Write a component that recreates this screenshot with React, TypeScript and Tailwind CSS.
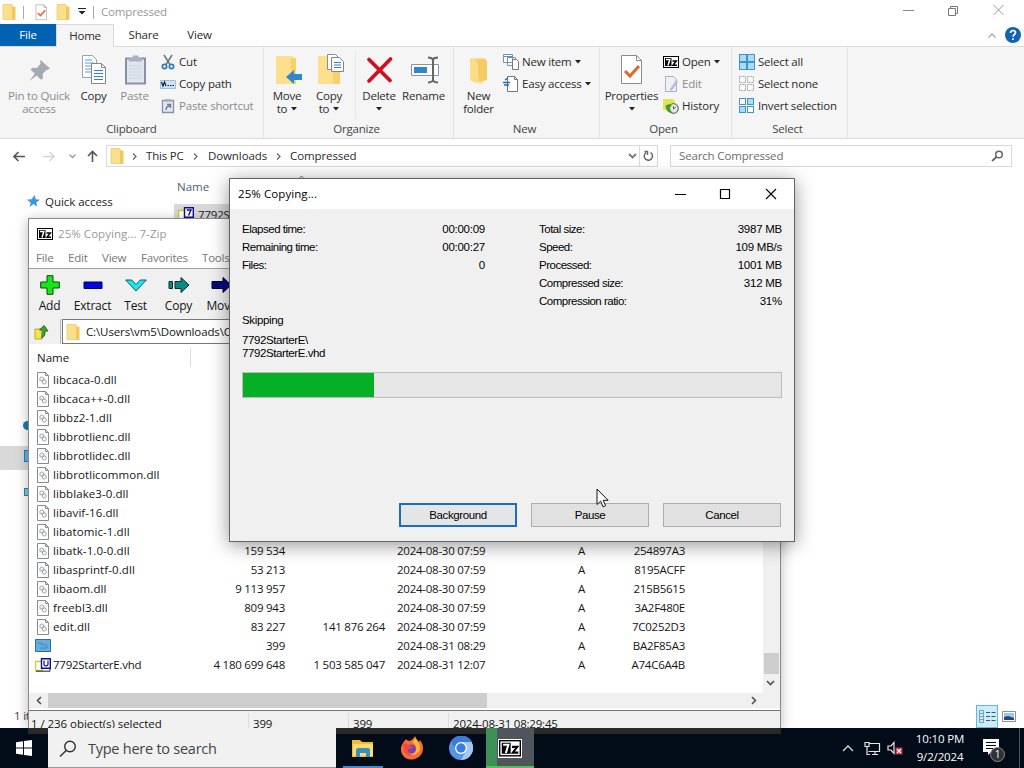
// Windows 10 desktop: Explorer in the back, 7-Zip file manager and its copy dialog on top.

import type { ReactNode } from 'react'

const FILES: string[][] = [
  ['libcaca-0.dll', '', '', '', '', ''],
  ['libcaca++-0.dll', '', '', '', '', ''],
  ['libbz2-1.dll', '', '', '', '', ''],
  ['libbrotlienc.dll', '', '', '', '', ''],
  ['libbrotlidec.dll', '', '', '', '', ''],
  ['libbrotlicommon.dll', '', '', '', '', ''],
  ['libblake3-0.dll', '', '', '', '', ''],
  ['libavif-16.dll', '', '', '', '', ''],
  ['libatomic-1.dll', '', '', '', '', ''],
  ['libatk-1.0-0.dll', '159 534', '', '2024-08-30 07:59', 'A', '254897A3'],
  ['libasprintf-0.dll', '53 213', '', '2024-08-30 07:59', 'A', '8195ACFF'],
  ['libaom.dll', '9 113 957', '', '2024-08-30 07:59', 'A', '215B5615'],
  ['freebl3.dll', '809 943', '', '2024-08-30 07:59', 'A', '3A2F480E'],
  ['edit.dll', '83 227', '141 876 264', '2024-08-30 07:59', 'A', '7C0252D3'],
  ['', '399', '', '2024-08-31 08:29', 'A', 'BA2F85A3'],
  ['7792StarterE.vhd', '4 180 699 648', '1 503 585 047', '2024-08-31 12:07', 'A', 'A74C6A4B'],
]

const LEFT_STATS = [
  ['Elapsed time:', '00:00:09'],
  ['Remaining time:', '00:00:27'],
  ['Files:', '0'],
]

const RIGHT_STATS = [
  ['Total size:', '3987 MB'],
  ['Speed:', '109 MB/s'],
  ['Processed:', '1001 MB'],
  ['Compressed size:', '312 MB'],
  ['Compression ratio:', '31%'],
]

/* ---------- icons ---------- */

function Svg({ w, h, children, className = '' }: { w: number; h: number; children: ReactNode; className?: string }) {
  return (
    <svg width={w} height={h} viewBox={`0 0 ${w} ${h}`} fill="none" className={`shrink-0 ${className}`}>
      {children}
    </svg>
  )
}

const Folder = () => (
  <Svg w={14} h={16}>
    <path d="M1 .5h9v2h2v13H1z" fill="#fbe08a" />
    <path d="M10 2.5h2.5l1 1v12H10z" fill="#f1c85e" />
    <path d="M1 .5h9v2M1 .5v15h12.5" stroke="#e9c565" strokeWidth=".7" />
  </Svg>
)

const Caret = () => (
  <Svg w={6} h={4}><path d="M0 0h6L3 3.5z" fill="#222" /></Svg>
)

const SevenZip = ({ size = 16 }: { size?: number }) => (
  <svg width={size} height={size * 0.75} viewBox="0 0 16 12" fill="none" className="shrink-0">
    <path d="M0 0h16v12H0z" fill="#000" />
    <path d="M1 1h14v10H1z" fill="#fff" />
    <path d="M2 2h6.5v8H2z" fill="#000" />
    <path d="M3 3.5h3.8L5 9.5" stroke="#fff" strokeWidth="1.5" />
    <path d="M9.5 5h3.8L10 9.2h4" stroke="#000" strokeWidth="1.5" />
  </svg>
)

const PinIcon = () => (
  <Svg w={32} h={32}>
    <path d="M17.5 6l9.500 8.500-2.500 1.500-1-.2-3.800 4.300.3 4.200-2 1.400-4.400-4.100-7 5.400 5.200-7.600-4.200-3.700 1.800-2 4.500.4 3.800-4.600-.6-1.600z" fill="#a5a9b0" />
  </Svg>
)

const CopyPages = () => (
  <Svg w={32} h={32}>
    <path d="M4.5 1.5h10l4 4v18h-14z" fill="#fff" stroke="#9aa0a8" />
    <path d="M7 6h7M7 9h9M7 12h9M7 15h9M7 18h9" stroke="#5b9bd5" />
    <path d="M13.500 9.500h10l4 4v16h-14z" fill="#fff" stroke="#7f8790" />
    <path d="M23.500 9.500v4h4" stroke="#7f8790" />
    <path d="M16 16.500h9M16 19.500h9M16 22.500h9M16 25.500h9" stroke="#2f80cf" />
  </Svg>
)

const PasteIcon = () => (
  <Svg w={32} h={32}>
    <path d="M7 4.500h19v25H7z" fill="#dfe6ee" stroke="#8792a5" strokeWidth="2" />
    <path d="M10 4.500c2 0 4-1 4-3h5c0 2 2 3 4 3v3H10z" fill="#aab2bd" />
    <path d="M10 12h13M10 15h13M10 18h13M10 21h13M10 24h13" stroke="#cbd5df" />
  </Svg>
)

const Scissors = () => (
  <Svg w={16} h={16}>
    <path d="M4 1l6 9.500M12 1l-6 9.500" stroke="#6b7480" strokeWidth="1.500" />
    <circle cx="4.500" cy="12.500" r="2.200" stroke="#2d7fb8" strokeWidth="1.700" />
    <circle cx="11.500" cy="12.500" r="2.200" stroke="#2d7fb8" strokeWidth="1.700" />
  </Svg>
)

const CopyPath = () => (
  <Svg w={16} h={16}>
    <path d="M.5 4.500h15v8H.5z" fill="#cfe2f5" stroke="#9fbfe0" />
    <path d="M1.500 6l1.500 4 1.500-4L6 10M7.500 9.500H9M10 9.500h1.500M12.500 9.500H14" stroke="#123" strokeWidth="1.200" />
  </Svg>
)

const PasteShortcut = () => (
  <Svg w={16} h={16}>
    <path d="M2.500 2.500h11v12h-11z" fill="#e3e9f0" stroke="#8792a5" strokeWidth="1.300" />
    <path d="M5 1h6v3H5z" fill="#aab2bd" />
    <path d="M6 12c0-3 1-4 4-4M7 6.500h3.500V10" stroke="#6d7a92" strokeWidth="1.400" />
  </Svg>
)

const MoveTo = () => (
  <Svg w={32} h={32}>
    <path d="M5 2h17v28H5z" fill="#fce08b" />
    <path d="M22 4h3v26h-5V4z" fill="#f7cf6b" />
    <path d="M15 23l8-7v4h8v6h-8v4z" fill="#3187cf" />
  </Svg>
)

const CopyTo = () => (
  <Svg w={32} h={32}>
    <path d="M5 2h17v28H5z" fill="#fce08b" />
    <path d="M22 8h5v22h-7V8z" fill="#f7cf6b" />
    <path d="M14.500.5h8l3 3v12h-11z" fill="#fff" stroke="#858d98" />
    <path d="M18.500 3.500h8l4 4v10h-12z" fill="#fff" stroke="#7b8490" />
    <path d="M21 8.500h7M21 11h7M21 13.500h7" stroke="#3d7fc4" />
  </Svg>
)

const DeleteX = () => (
  <Svg w={32} h={32}>
    <path d="M6 5.500l21 21M27.500 5L6 27" stroke="#cf1020" strokeWidth="3.800" strokeLinecap="round" />
  </Svg>
)

const RenameIcon = () => (
  <Svg w={32} h={32}>
    <path d="M3.500 10.500h27v11h-27z" fill="#fff" stroke="#8b949e" />
    <path d="M6 13h13v6H6z" fill="#3187cf" />
    <path d="M20 3.500c3 0 4 .5 5 2 1-1.500 2-2 5-2M25 5v22M20 28.500c3 0 4-.5 5-2 1 1.500 2 2 5 2" stroke="#666" strokeWidth="2" />
  </Svg>
)

const NewFolder = () => (
  <Svg w={32} h={32}>
    <path d="M7 4h15v22l-4 4-10-3z" fill="#fbe39a" />
    <path d="M12 5h10l2 2v19l-8 2z" fill="#f5cb66" />
    <path d="M7 4l8 4v21l-8-3z" fill="#fbdc88" />
  </Svg>
)

const NewItem = () => (
  <Svg w={16} h={16}>
    <path d="M.5.5h9v8h-9zM4.500 3.500h8v8h-8z" fill="#fff" stroke="#7893a8" />
    <path d="M9.500 5.500h4l2 2v8h-6z" fill="#fff" stroke="#777" />
    <path d="M1 2.500h8" stroke="#4e93c5" />
  </Svg>
)

const EasyAccess = () => (
  <Svg w={16} h={16}>
    <path d="M4.500.5h7l3 3v12h-10z" fill="#fff" stroke="#6d7882" />
    <path d="M11.500.5v3h3" stroke="#6d7882" />
    <path d="M0 6.500h7M1 9h5M2 4l3-2" stroke="#236fae" strokeWidth="1.500" />
  </Svg>
)

const PropertiesIcon = ({ size = 32 }: { size?: number }) => (
  <svg width={size} height={size} viewBox="0 0 32 32" fill="none" className="shrink-0">
    <path d="M5.500 1.500h15l5 5v23h-20z" fill="#fff" stroke="#8b8b8b" />
    <path d="M20.500 1.500v5h5" stroke="#8b8b8b" />
    <path d="M9 17l5 5 9-10" stroke="#e2682b" strokeWidth="3" />
  </svg>
)

const EditIcon = () => (
  <Svg w={16} h={16}>
    <path d="M2.500.5h8l3 3v12h-11z" fill="#eef0f6" stroke="#aab0c0" />
    <path d="M7 13l6-9 2 1.500-6 9H7z" fill="#b5bdcf" />
  </Svg>
)

const HistoryIcon = () => (
  <Svg w={16} h={16}>
    <path d="M0 1h10l2 2v9H0z" fill="#e6e255" />
    <circle cx="10.500" cy="10.500" r="4.800" fill="#e3ece4" stroke="#5d7d68" strokeWidth="1.200" />
    <path d="M10.500 8v3l2.500-2" stroke="#666" />
    <path d="M2 8l4-2 3 2-2 1c0 3 1 4 3 6-5 0-7-3-7-6z" fill="#3f9d2c" />
  </Svg>
)

function SelectIcon({ kind }: { kind: 'all' | 'none' | 'invert' }) {
  const cells = [[0, 0], [8, 0], [0, 8], [8, 8]]
  const size = kind === 'all' ? 7 : 6
  return (
    <Svg w={16} h={16}>
      {cells.map(([x, y], i) => {
        const on = kind === 'all' || (kind === 'invert' && (i === 1 || i === 2))
        return (
          <rect
            key={i} x={x + 0.5} y={y + 0.5} width={size} height={size}
            fill={on ? '#a9dcfb' : '#fafafa'}
            stroke={kind === 'none' ? '#a2a2a2' : '#4193c8'}
            strokeDasharray={kind === 'none' ? '2 1' : undefined}
          />
        )
      })}
    </Svg>
  )
}

const DllIcon = () => (
  <Svg w={12} h={16}>
    <path d="M.5.5h8l3 3v12H.5z" fill="#fff" stroke="#8a8a8a" />
    <path d="M8.500.5v3h3" stroke="#8a8a8a" />
    <circle cx="4.800" cy="7" r="2" stroke="#9aa1a8" />
    <circle cx="7.300" cy="10" r="2" stroke="#9aa1a8" />
    <path d="M2.500 9l6-2" stroke="#b5babf" />
  </Svg>
)

const ArchiveIcon = ({ letter }: { letter: 'U' | '7' }) => (
  <Svg w={16} h={14}>
    <path d="M.5 3.500h7v9h-7z" fill="#fff" stroke="#c9cf1a" strokeWidth="1.300" />
    <path d="M1 13.200h14V10.500" stroke="#222" />
    <path d="M6.500.7h8.800v9.600H6.500z" fill="#fff" stroke="#10108a" strokeWidth="1.400" />
    {letter === 'U'
      ? <path d="M9 2.500V6c0 2.500 4 2.500 4 0V2.500" stroke="#10108a" strokeWidth="1.200" />
      : <path d="M8.800 3H13l-2.500 5.500" stroke="#10108a" strokeWidth="1.400" />}
  </Svg>
)

/* ---------- ribbon ---------- */

function Group({ label, className, children }: { label: string; className: string; children: ReactNode }) {
  return (
    <div className={`flex flex-col shrink-0 border-r border-[#e2e3e4] ${className}`}>
      <div className="flex h-[73px] pt-1">{children}</div>
      <div className="text-center leading-[17px] text-[#444]">{label}</div>
    </div>
  )
}

function BigButton({ icon, lines, caret, className }: { icon: ReactNode; lines: string[]; caret?: boolean; className: string }) {
  return (
    <div className={`flex flex-col items-center shrink-0 whitespace-nowrap pt-[3px] ${className}`}>
      {icon}
      <div className="mt-[3px] leading-[13px] text-center">{lines[0]}</div>
      <div className="flex items-center justify-center gap-1 h-[13px] leading-[13px]">
        {lines[1]}
        {caret && <Caret />}
      </div>
    </div>
  )
}

function SmallButton({ icon, label, caret, off }: { icon: ReactNode; label: string; caret?: boolean; off?: boolean }) {
  return (
    <div className={`flex items-center h-[22px] gap-[3px] whitespace-nowrap ${off ? 'text-[#8b8b8b]' : ''}`}>
      {icon}
      <span>{label}</span>
      {caret && <Caret />}
    </div>
  )
}

function Ribbon() {
  return (
    <div className="flex h-[93px] bg-[#f5f5f6] border-y border-[#dadbdc] text-[#2b2b2b]">
      <Group label="Clipboard" className="w-[264px]">
        <BigButton className="w-[78px] text-[#8b8b8b]" icon={<PinIcon />} lines={['Pin to Quick', 'access']} />
        <BigButton className="w-[31px]" icon={<CopyPages />} lines={['Copy', '']} />
        <BigButton className="w-[51px] text-[#8b8b8b]" icon={<PasteIcon />} lines={['Paste', '']} />
        <div>
          <SmallButton icon={<Scissors />} label="Cut" />
          <SmallButton icon={<CopyPath />} label="Copy path" />
          <SmallButton icon={<PasteShortcut />} label="Paste shortcut" off />
        </div>
      </Group>
      <Group label="Organize" className="w-[190px] pr-1">
        <BigButton className="ml-[3px] w-[40px]" icon={<MoveTo />} lines={['Move', 'to']} caret />
        <BigButton className="w-[44px]" icon={<CopyTo />} lines={['Copy', 'to']} caret />
        <div className="ml-1 w-px h-[68px] bg-[#e6e7e8]" />
        <BigButton className="w-[46px]" icon={<DeleteX />} lines={['Delete', '']} caret />
        <BigButton className="w-[43px]" icon={<RenameIcon />} lines={['Rename', '']} />
      </Group>
      <Group label="New" className="w-[146px] pr-1">
        <BigButton className="w-[49px]" icon={<NewFolder />} lines={['New', 'folder']} />
        <div>
          <SmallButton icon={<NewItem />} label="New item" caret />
          <SmallButton icon={<EasyAccess />} label="Easy access" caret />
        </div>
      </Group>
      <Group label="Open" className="w-[132px] pr-1">
        <BigButton className="w-[61px] ml-[1px] mr-[1px]" icon={<PropertiesIcon />} lines={['Properties', '']} caret />
        <div>
          <SmallButton icon={<SevenZip />} label="Open" caret />
          <SmallButton icon={<EditIcon />} label="Edit" off />
          <SmallButton icon={<HistoryIcon />} label="History" />
        </div>
      </Group>
      <Group label="Select" className="w-[116px] pr-1">
        <div className="ml-[7px]">
          <SmallButton icon={<SelectIcon kind="all" />} label="Select all" />
          <SmallButton icon={<SelectIcon kind="none" />} label="Select none" />
          <SmallButton icon={<SelectIcon kind="invert" />} label="Invert selection" />
        </div>
      </Group>
    </div>
  )
}

/* ---------- explorer ---------- */

const Chev = () => <Svg w={5} h={7}><path d="M1 .5l3 3-3 3" stroke="#666" strokeWidth="1.200" /></Svg>

function Explorer() {
  return (
    <div className="flex flex-col h-[728px] bg-white">
      <div className="flex items-center h-6 pl-[2px]">
        <Folder />
        <div className="ml-[7px] w-px h-[13px] bg-[#aaa]" />
        <div className="ml-[9px]"><PropertiesIcon size={17} /></div>
        <div className="ml-[6px]"><Folder /></div>
        <Svg w={8} h={8} className="ml-[8px]"><path d="M0 .5h8" stroke="#222" /><path d="M.5 3h7L4 6.500z" fill="#222" /></Svg>
        <div className="ml-[7px] w-px h-[13px] bg-[#aaa]" />
        <div className="ml-[7px] text-[#999] tracking-[-0.15px]">Compressed</div>
        <Svg w={110} h={14} className="ml-auto mr-[16px] -mt-1">
          <path d="M5 7.500h11" stroke="#888" />
          <path d="M50.500 5.500h7v7h-7zM52.500 5.500v-2h7v7h-2" stroke="#777" />
          <path d="M95.500 2l10 10M105.500 2l-10 10" stroke="#999" />
        </Svg>
      </div>
      <div className="flex h-[22px] leading-[22px] text-center text-[#2b2b2b]">
        <div className="w-[56px] bg-[#0063b1] text-white">File</div>
        <div className="relative w-[58px] h-[23px] leading-[21px] bg-[#f5f5f6] border-x border-t border-[#dadbdc]">Home</div>
        <div className="w-[59px]">Share</div>
        <div className="w-[53px]">View</div>
        <div className="ml-auto flex items-center gap-[9px] pr-[3px]">
          <Svg w={8} h={5}><path d="M.5 4.500L4 1l3.500 3.500" stroke="#aaa" strokeWidth="1.300" /></Svg>
          <Svg w={16} h={16}>
            <circle cx="8" cy="8" r="8" fill="#0f62b4" />
            <path d="M5.500 6c0-3.300 5-3.300 5-.3 0 1.800-2.400 1.800-2.400 4M8 11.300V13" stroke="#fff" strokeWidth="1.700" />
          </Svg>
        </div>
      </div>
      <Ribbon />

      <div className="flex items-center h-[34px] pl-[13px] text-[#2b2b2b]">
        <Svg w={12} h={11}><path d="M12 5.500H1M5.500 1L1 5.500 5.500 10" stroke="#555" strokeWidth="1.600" /></Svg>
        <Svg w={12} h={11} className="ml-[18px]"><path d="M0 5.500h11M6.500 1L11 5.500 6.500 10" stroke="#d4d4d4" strokeWidth="1.300" /></Svg>
        <Svg w={7} h={5} className="ml-[14px]"><path d="M.5.5l3 3 3-3" stroke="#999" strokeWidth="1.300" /></Svg>
        <Svg w={11} h={12} className="ml-[11px]"><path d="M5.500 12V1.500M1 6l4.500-4.500L10 6" stroke="#555" strokeWidth="1.600" /></Svg>
        <div className="ml-[8px] flex items-center w-[552px] h-[22px] border border-[#d9d9d9]">
          <div className="ml-[3px]"><Folder /></div>
          <div className="ml-[8px]"><Chev /></div>
          <span className="ml-[9px] w-[39px]">This PC</span>
          <div className="ml-[8px]"><Chev /></div>
          <span className="ml-[10px] w-[60px] tracking-[-0.1px]">Downloads</span>
          <div className="ml-[8px]"><Chev /></div>
          <span className="ml-[9px] tracking-[-0.1px]">Compressed</span>
          <Svg w={9} h={6} className="ml-auto mr-[2px]"><path d="M1 1l3.500 3.500L8 1" stroke="#777" strokeWidth="1.800" /></Svg>
          <div className="flex items-center justify-center w-[18px] h-full border-l border-[#d9d9d9]">
            <Svg w={11} h={12}><path d="M3 2.500C1 4 .8 7 2.200 8.800c2 2.300 6 1.700 7-1.300.6-2-.2-4-1.700-5M1.500 1.500h3v3.500" stroke="#666" strokeWidth="1.500" /></Svg>
          </div>
        </div>
        <div className="ml-[12px] flex items-center justify-between w-[342px] h-[22px] pl-[8px] pr-[7px] border border-[#d9d9d9] text-[#6d6d6d]">
          <span className="tracking-[-0.15px]">Search Compressed</span>
          <Svg w={13} h={12}><circle cx="8" cy="4.500" r="3.300" stroke="#666" strokeWidth="1.500" /><path d="M5.500 7L1 11" stroke="#666" strokeWidth="1.800" /></Svg>
        </div>
      </div>

      <div className="flex grow text-[#222]">
        <div className="w-[174px] pt-[19px]">
          <div className="flex items-center h-[19px] pl-[27px] gap-[5px] tracking-[-0.05px]">
            <Svg w={13} h={13}><path d="M7.500 0l1.200 4.200 4.300.6-3.600 2.400.6 4.600-3.500-2.700L2.500 12l1.200-4.300L0 4.500l4.700-.3z" fill="#3c97db" /></Svg>
            <span>Quick access</span>
          </div>
          <div className="mt-[210px] ml-[23px] w-[10px] h-[9px] rounded-full bg-[#1e78b4]" />
          <div className="mt-[16px] h-[24px] bg-[#d9d9d9] pt-[4px] pl-[24px]">
            <div className="w-3 h-3 bg-[#65b2ea] border border-[#2c78ad]" />
          </div>
          <div className="mt-[18px] ml-[24px] w-3 h-[8px] bg-[#7dc6d8] border border-[#3a8397]" />
        </div>
        <div className="w-[500px] pt-[2px]">
          <div className="flex h-[22px] pl-[3px] text-[#4c607a]">
            <span className="w-[120px] leading-[24px] tracking-normal">Name</span>
            <Svg w={9} h={5}><path d="M1 4.500L4.500 1 8 4.500" stroke="#777" /></Svg>
          </div>
          <div className="mt-[7px] flex items-center h-[19px] pl-1 gap-[4px] bg-[#d9d9d9]">
            <ArchiveIcon letter="7" />
            <span className="relative top-px">7792StarterE</span>
          </div>
        </div>
      </div>

      <div className="flex items-center h-[24px] pl-[14px] pr-[7px]">
        <span className="text-[#444]">1 item</span>
        <div className="ml-auto w-[22px] h-[23px] flex items-center justify-center bg-[#ccebfb] border border-[#62b8de]">
          <Svg w={17} h={13}>
            <path d="M.5.5h4v12h-4zM.5 3.500h4M.5 6.500h4M.5 9.500h4" stroke="#7ba0b4" />
            <path d="M7 2.500h4M7 6.500h4M7 10.500h4M12.500 2.500h4M12.500 6.500h4M12.500 10.500h4" stroke="#37576b" />
          </Svg>
        </div>
        <Svg w={14} h={11} className="ml-[4px] mr-px">
          <path d="M.5.5h13v10H.5z" fill="#fff" stroke="#8a8fb0" />
          <path d="M2 2h10v7H2z" fill="#9cc9e8" />
          <path d="M2 9V6l4-1 6 2v2z" fill="#27496b" />
        </Svg>
      </div>
    </div>
  )
}

/* ---------- 7-Zip file manager ---------- */

const TOOLS: { label: string; icon: ReactNode }[] = [
  { label: 'Add', icon: <Svg w={20} h={20}><path d="M7 .7h6V7h6.300v6H13v6.300H7V13H.7V7H7z" fill="#19e619" stroke="#0a4a0a" /></Svg> },
  { label: 'Extract', icon: <Svg w={20} h={20}><path d="M1 7h18v6.500H1z" fill="#0505e0" stroke="#00005a" /></Svg> },
  { label: 'Test', icon: <Svg w={22} h={20}><path d="M.7 5h6L11 9.500 15.300 5h6L11 16z" fill="#18e8f0" stroke="#0b5c60" /></Svg> },
  { label: 'Copy', icon: <Svg w={22} h={20}><path d="M1 6.500h3.500v7H1zM7 6.500h6v-4l8 7.500-8 7.500v-4H7z" fill="#128585" stroke="#06302f" /></Svg> },
  { label: 'Move', icon: <Svg w={22} h={20}><path d="M1 6.500h11v-4l8 7.500-8 7.500v-4H1z" fill="#0a0a7a" stroke="#000038" /></Svg> },
]

function rowIcon(name: string) {
  if (name.endsWith('.dll')) return <DllIcon />
  if (name.endsWith('.vhd')) return <ArchiveIcon letter="U" />
  return (
    <Svg w={16} h={13}>
      <path d="M.5.5h15v12H.5z" fill="#66aede" stroke="#2d6d9e" />
      <path d="M3 4h4v2h5v3H5" stroke="#3c86ba" />
    </Svg>
  )
}

function FileManager() {
  return (
    <div className="absolute left-[28px] top-[218px] w-[753px] h-[510px] flex flex-col overflow-hidden bg-[#f0f0f0] border-x border-t border-[#8a8a8a] text-[#151515]">
      <div className="flex items-center h-[29px] shrink-0 bg-white pl-[8px] gap-[5px] text-[#999] tracking-[0.05px]">
        <SevenZip />
        <span>25% Copying... 7-Zip</span>
      </div>
      <div className="flex h-[21px] shrink-0 leading-[20px] bg-white border-b border-[#a0a0a0] pl-[7px] text-[#777]">
        <span className="w-[32px]">File</span>
        <span className="w-[34px]">Edit</span>
        <span className="w-[39px]">View</span>
        <span className="w-[61px]">Favorites</span>
        <span>Tools</span>
      </div>
      <div className="flex h-[50px] shrink-0 pt-[6px] -ml-px">
        {TOOLS.map(t => (
          <div key={t.label} className="flex flex-col items-center w-[43px] text-[12px]">
            {t.icon}
            <span className="mt-[3px] leading-[16px]">{t.label}</span>
          </div>
        ))}
      </div>
      <div className="flex items-center h-[25px] shrink-0">
        <div className="flex items-center w-[32px] h-full pl-[5px] border-r border-[#bbb]">
          <Svg w={16} h={16}>
            <path d="M1 5h7v10H1z" fill="#f4e34f" stroke="#c4aa20" />
            <path d="M7 14c4-1 4-4 4-7h3l-4-5.500L5.500 6H8" fill="#3fa02a" stroke="#1f6b16" />
          </Svg>
        </div>
        <div className="ml-px flex items-center grow h-full bg-white border border-r-0 border-[#777] pl-[3px] gap-[6px] whitespace-nowrap tracking-[-0.12px]">
          <Folder />
          <span>C:\Users\vm5\Downloads\Compressed\7792StarterE.7z\</span>
        </div>
      </div>
      <div className="flex flex-col h-[367px] shrink-0 bg-white border-b border-[#777]">
        <div className="flex grow">
          <div className="w-[734px] tracking-[-0.25px]">
            <div className="flex h-[26px] items-center">
              <div className="w-[162px] h-[19px] leading-[19px] pl-2 border-r border-[#ddd] tracking-normal">Name</div>
            </div>
            {FILES.map((f, i) => (
              <div key={i} className="flex items-center h-[19px] leading-[19px] whitespace-nowrap">
                <div className="flex items-center w-[172px]">
                  <div className={f[0].endsWith('.dll') ? 'flex w-[24px] pl-[8px]' : 'flex w-[24px] pl-[6px]'}>
                    {rowIcon(f[0])}
                  </div>
                  <span className={f[0].endsWith('.dll') ? 'tracking-[0.08px]' : ''}>{f[0]}</span>
                </div>
                <span className="w-[84px] text-right">{f[1]}</span>
                <span className="w-[100px] text-right">{f[2]}</span>
                <span className="w-[100px] ml-[12px]">{f[3]}</span>
                <span className="w-[88px] text-right">{f[4]}</span>
                <span className="w-[100px] text-right">{f[5]}</span>
              </div>
            ))}
          </div>
          <div className="flex flex-col items-center w-[17px] bg-[#f0f0f0]">
            <div className="mt-[309px] w-[15px] h-[21px] bg-[#cdcdcd]" />
            <Svg w={9} h={6} className="mt-[6px] -ml-[2px]"><path d="M1 1l3.500 3.500L8 1" stroke="#505050" strokeWidth="1.600" /></Svg>
          </div>
        </div>
        <div className="flex items-center h-[15px] bg-[#f0f0f0] mb-[2px]">
          <Svg w={6} h={9} className="ml-[7px]"><path d="M5 1L1.500 4.500 5 8" stroke="#505050" strokeWidth="1.600" /></Svg>
          <div className="ml-[6px] w-[439px] h-[15px] bg-[#cdcdcd]" />
          <Svg w={6} h={9} className="ml-auto mr-[23px]"><path d="M1 1l3.500 3.500L1 8" stroke="#505050" strokeWidth="1.600" /></Svg>
        </div>
      </div>
      <div className="flex h-[30px] pt-[2px] leading-[21px] shrink-0 tracking-[-0.2px] whitespace-nowrap">
        <span className="w-[219px] pl-[2px] tracking-[-0.05px]">1 / 236 object(s) selected</span>
        <span className="w-[100px] pl-1 border-l border-[#dcdcdc]">399</span>
        <span className="w-[100px] pl-1 border-l border-[#dcdcdc]">399</span>
        <span className="pl-1 border-l border-[#dcdcdc]">2024-08-31 08:29:45</span>
      </div>
    </div>
  )
}

/* ---------- progress dialog ---------- */

function StatColumn({ rows, className }: { rows: string[][]; className: string }) {
  return (
    <div className={className}>
      {rows.map(([k, v]) => (
        <div key={k} className="flex justify-between h-[18px] leading-[18px]">
          <span>{k}</span>
          <span className="tracking-[-0.25px]">{v}</span>
        </div>
      ))}
    </div>
  )
}

function ProgressDialog() {
  const percent = 24.4
  return (
    <div className="absolute left-[229px] top-[178px] w-[566px] h-[364px] flex flex-col bg-[#f0f0f0] border border-[#636363] shadow-[0_3px_18px_rgba(0,0,0,0.42)] text-black">
      <div className="flex items-center h-[30px] shrink-0 bg-white pl-[8px] tracking-[0.08px]">
        <span>25% Copying...</span>
        <Svg w={104} h={12} className="ml-auto mr-[17px] -mt-px">
          <path d="M2 6.500h11" stroke="#000" />
          <path d="M47.500 1.500h9v9h-9z" stroke="#000" strokeWidth="1.200" />
          <path d="M93 1l10 10M103 1L93 11" stroke="#000" strokeWidth="1.100" />
        </Svg>
      </div>
      <div className="flex flex-col grow px-[12px] pt-[11px] font-['Liberation_Sans'] text-[11.5px] tracking-[-0.5px]">
        <div className="flex">
          <StatColumn rows={LEFT_STATS} className="w-[243px]" />
          <StatColumn rows={RIGHT_STATS} className="w-[243px] ml-[54px]" />
        </div>
        <div className="mt-[2px] leading-[16px] tracking-[-0.35px]">Skipping</div>
        <div className="mt-[6px] leading-[13px] whitespace-pre tracking-[-0.4px]">{'7792StarterE\\\n7792StarterE.vhd'}</div>
        <div className="mt-[12px] h-[26px] w-[540px] bg-[#e6e6e6] border border-[#bcbcbc]">
          <div className="h-full bg-[#06b025]" style={{ width: `${percent}%` }} />
        </div>
        <div className="mt-[105px] flex gap-[14px] justify-end tracking-[-0.4px] leading-[22px] text-center pr-[1px]">
          <div className="w-[118px] h-[24px] leading-[20px] bg-[#e4e5e6] border-2 border-[#1d6fb5]">Background</div>
          <div className="w-[118px] h-[24px] bg-[#e1e1e1] border border-[#adadad]">Pause</div>
          <div className="w-[118px] h-[24px] bg-[#e1e1e1] border border-[#adadad]">Cancel</div>
        </div>
      </div>
    </div>
  )
}

/* ---------- taskbar ---------- */

function Taskbar() {
  return (
    <div className="relative flex h-[40px] bg-[#020b18] text-white">
      {/* the file manager's lower edge shows through the bar */}
      <div className="absolute left-[28px] top-0 w-[753px] h-[6px] bg-[#292929]" />
      <div className="flex items-center justify-center w-[48px]">
        <Svg w={16} h={16}><path d="M0 2.300l7-1v6.200H0zM8 1.100L16 0v7.500H8zM0 8.500h7v6.200l-7-1zM8 8.500h8V16l-8-1.100z" fill="#fff" /></Svg>
      </div>
      <div className="relative flex items-center w-[288px] pl-[11px] pt-[2px] bg-[#f1f1f1] border-b border-[#999] text-[#444] text-[14.5px] tracking-[-0.25px]">
        <Svg w={18} h={18} className="mr-[11px]">
          <circle cx="11" cy="6.500" r="5.300" stroke="#333" strokeWidth="1.400" />
          <path d="M7.200 10.500L1 16.500" stroke="#333" strokeWidth="1.500" />
        </Svg>
        Type here to search
      </div>
      <div className="relative flex">
        <div className="flex flex-col items-center w-[40px] ml-[7px]">
          <Svg w={22} h={19} className="mt-[11px]">
            <path d="M0 1h8l2 2h11v15H0z" fill="#f3b936" />
            <path d="M1 5h20v12H1z" fill="#fbdc72" />
            <path d="M4 18v-7q0-2 2-2h10q2 0 2 2v7h-4v-4H8v4z" fill="#3c8fbd" />
          </Svg>
          <div className="mt-auto w-full h-[2px] bg-[#3f8bd8]" />
        </div>
        <div className="flex items-center justify-center w-[58px]">
          <Svg w={24} h={24}>
            <path d="M3 7c1-2 2-2 3-4 1 1 2 2 4 2 2-1 4-3 5-5 1 3 3 4 4 6l1-2c3 4 4 8 2 13-4 8-16 9-20 1-2-4-1-8 1-11z" fill="#fb6b35" />
            <path d="M15 1c1 4 6 6 5 12-1 5-7 7-10 5 8 0 8-9 2-12 2-1 3-3 3-5z" fill="#ffbc33" />
            <circle cx="11.500" cy="13" r="4.500" fill="#7942b5" />
            <path d="M3 8c3-1 5 0 7 2l3 1c-1 2-4 1-5 3-1 3 2 5 5 5-5 2-9-2-9-6z" fill="#f14a43" />
          </Svg>
        </div>
        <div className="flex items-center justify-center w-[39px]">
          <Svg w={24} h={24}>
            <circle cx="12" cy="12" r="12" fill="#5795eb" />
            <path d="M12 6h11A12 12 0 0 0 2 5.500l5 9z" fill="#3c7cd8" />
            <path d="M22.500 6H12l5 9-5 9A12 12 0 0 0 22.500 6z" fill="#9fc8f8" />
            <circle cx="12" cy="12" r="6" fill="#fff" />
            <circle cx="12" cy="12" r="4.700" fill="#3c7de0" />
          </Svg>
        </div>
        <div className="flex w-[48px] ml-[6px] bg-[#50555b] border-b-2 border-[#4cc44f]">
          <div className="w-[11px] bg-[#3f8f58]" />
          <div className="flex items-center ml-[1px] mt-[3px]">
            <div className="p-[1px] bg-white"><SevenZip size={22} /></div>
          </div>
        </div>
      </div>
      <div className="ml-auto flex items-center">
        <Svg w={12} h={8} className="mr-px"><path d="M1 7l5-5 5 5" stroke="#ddd" strokeWidth="1.300" /></Svg>
        <Svg w={17} h={15} className="ml-[9px]">
          <path d="M4.500 2.500h11v8h-11M8 13.500h6M11 10.500v3M1 1.500h4v4H1zM3 5.500v8h3" stroke="#e6e6e6" strokeWidth="1.200" />
        </Svg>
        <Svg w={17} h={15} className="ml-[6px]">
          <path d="M1 5h3l3-3.500v11L4 9H1z" stroke="#e6e6e6" strokeWidth="1.200" />
          <path d="M8.500 6.500h7v7h-7z" fill="#d32f3a" />
          <path d="M10 8l4 4M14 8l-4 4" stroke="#fff" strokeWidth="1.300" />
        </Svg>
        <div className="w-[54px] ml-[9px] text-center leading-[18px] text-[11.5px] tracking-[-0.15px] whitespace-nowrap">
          <div>10:10 PM</div>
          <div>9/2/2024</div>
        </div>
        <div className="relative ml-[15px] w-[24px] h-[28px]">
          <Svg w={18} h={18} className="mt-[5px] ml-[1px]">
            <path d="M0 0h16v13H8l-3 3v-3H0z" fill="#fff" />
            <path d="M3 3.500h10M3 6.500h10M3 9.500h7" stroke="#020b18" />
          </Svg>
          <div className="absolute left-[8px] top-[13px] w-[15px] h-[15px] rounded-full bg-[#303439] border border-[#888] text-[10px] leading-[13px] text-center">1</div>
        </div>
        <div className="ml-[13px] mr-1 w-px h-[40px] bg-[#4a525c]" />
      </div>
    </div>
  )
}

export default function App() {
  return (
    <div className="relative w-[1024px] h-[768px] overflow-hidden bg-white font-['Open_Sans','Noto_Sans',sans-serif] text-[11.5px] tracking-[-0.2px] leading-4">
      <Explorer />
      <div className="absolute left-[28px] top-[218px] w-[753px] h-[510px] shadow-[0_2px_12px_rgba(0,0,0,0.28)]" />
      <Taskbar />
      <FileManager />
      <ProgressDialog />
      <Svg w={13} h={20} className="absolute left-[596px] top-[488px]">
        <path d="M1 1v15.500l3.600-3.400L7 18.800l2.600-1.100-2.400-5.400h4.900z" fill="#fff" stroke="#111" />
      </Svg>
    </div>
  )
}
